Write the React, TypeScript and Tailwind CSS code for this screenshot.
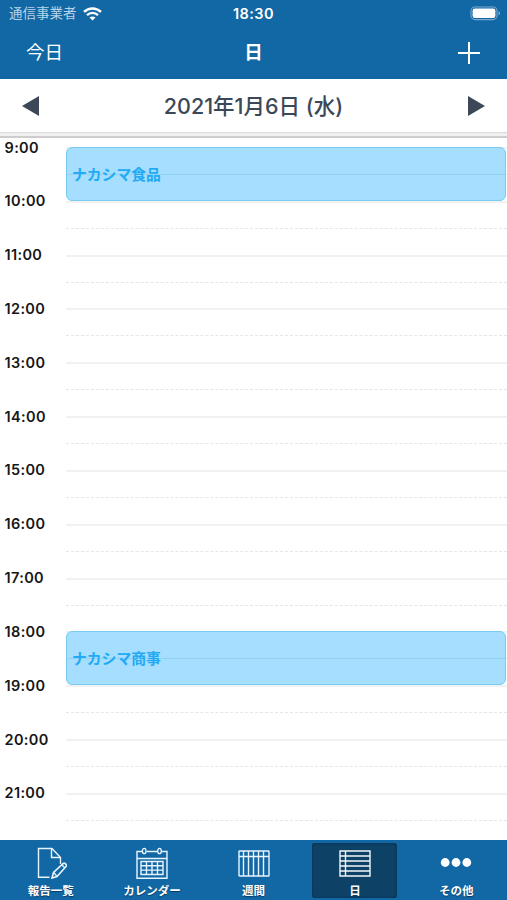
import React from "react";

const hours = [9, 10, 11, 12, 13, 14, 15, 16, 17, 18, 19, 20, 21];

const events: Record<number, string> = {
  9: "ナカシマ食品",
  18: "ナカシマ商事",
};

const WifiIcon = () => (
  <svg className="ml-[6px] h-[14px] w-[19px]" viewBox="0 0 19 14" fill="none">
    <path d="M1 4.9C5.8.3 13.2.3 18 4.9" stroke="white" strokeWidth="2.5" />
    <path d="M4 8.1c3.1-3 7.9-3 11 0" stroke="white" strokeWidth="2.4" />
    <path d="M6.5 10.6c1.7-1.6 4.3-1.6 6 0l-3 3z" fill="white" />
  </svg>
);

const BatteryIcon = () => (
  <svg className="h-[15px] w-[31px]" viewBox="0 0 31 15" fill="none">
    <rect
      x="1"
      y="1"
      width="26"
      height="12.6"
      rx="4"
      stroke="#78a9cd"
      strokeWidth="1.1"
    />
    <rect x="2.6" y="2.6" width="22.8" height="9.4" rx="2.2" fill="white" />
    <path d="M28.5 5v4.6c1-.5 1.6-1.3 1.6-2.3S29.5 5.5 28.5 5z" fill="#78a9cd" />
  </svg>
);

const ReportIcon = () => (
  <svg className="h-8 w-8" viewBox="0 0 32 32" fill="none" stroke="#e8f5ff">
    <path d="M14.5 30.3H3.5V1.5H17L25.5 10.5V17" strokeWidth="1.4" />
    <path d="M16.5 1.5V10.5H25.5" strokeWidth="1.4" />
    <path
      d="M17 31l1.500-5.500L28.300 16.500q1-.7 2 .2l.9.900q.7 1-.2 1.900L22 29.500z"
      strokeWidth="1.600"
    />
    <path d="M27 18l3 3M18.800 25.500l3 3.700" strokeWidth="1.300" />
  </svg>
);

const CalendarIcon = () => (
  <svg className="h-8 w-8" viewBox="0 0 32 32" fill="none" stroke="#e8f5ff">
    <path
      d="M6 4.500H1V31.300H31V4.500H25.500M10.500 4.500h11M1 11.500h30"
      strokeWidth="1.400"
    />
    <ellipse cx="8.200" cy="4" rx="1.800" ry="2.700" strokeWidth="1.300" />
    <ellipse cx="23.500" cy="4" rx="1.800" ry="2.700" strokeWidth="1.300" />
    <path
      d="M5 14.500H27V27.500H5zM5 18.800H27M5 23.100H27M10.500 14.500v13M16 14.500v13M21.500 14.500v13"
      strokeWidth="1.400"
    />
  </svg>
);

const WeekIcon = () => (
  <svg className="h-8 w-8" viewBox="0 0 32 32" fill="none" stroke="#e8f5ff">
    <rect x="1" y="4" width="30" height="25" rx=".5" strokeWidth="1.400" />
    <path
      d="M1 9.500h30M5.500 4v25M10.500 4v25M15.500 4v25M20.500 4v25M25.500 4v25"
      strokeWidth="1.400"
    />
  </svg>
);

const DayIcon = () => (
  <svg className="h-8 w-8" viewBox="0 0 32 32" fill="none" stroke="#f3f8fc">
    <path
      d="M1 4H31V29H1zM6.500 4v25M1 9h30M1 14h30M1 19h30M1 24h30"
      strokeWidth="1.400"
    />
  </svg>
);

const MoreIcon = () => (
  <svg className="h-8 w-8" viewBox="0 0 32 32" fill="white">
    <circle cx="5.200" cy="15.500" r="4.400" />
    <circle cx="16" cy="15.500" r="4.400" />
    <circle cx="26.800" cy="15.500" r="4.400" />
  </svg>
);

interface TabProps {
  label: string;
  icon: React.ReactNode;
  active?: boolean;
}

const Tab: React.FC<TabProps> = ({ label, icon, active }) => (
  <div className="flex flex-1 justify-center pt-[3px]">
    <button
      className={
        active
          ? "flex h-[55px] w-[85px] flex-col items-center rounded-[3px] bg-[#0d4266] pt-[4px] shadow-[inset_0_0_3px_#062c48]"
          : "flex h-[55px] w-[85px] flex-col items-center pt-[4px]"
      }
    >
      {icon}
      <span className="mt-[5px] whitespace-nowrap text-[11.5px] font-bold leading-[14px] text-white [text-shadow:0_1px_1px_#063a63]">
        {label}
      </span>
    </button>
  </div>
);

const HourRow = ({ hour }: { hour: number }) => (
  <div className="flex h-[53.83px] shrink-0">
    <div className="-mt-[9.5px] w-[66px] shrink-0 pl-[4.5px] text-[14.5px] font-semibold leading-5 tracking-[0.35px] text-[#161616]">
      {hour}:00
    </div>
    <div className="relative flex-1">
      <div className="h-[27px] border-t-2 border-[#f1f1f2]" />
      <div className="border-t border-dashed border-[#e6e6e6]" />
      {events[hour] && (
        <div className="absolute inset-x-0 top-0 mr-px flex h-[53.5px] items-center rounded-[6px] border-[1.5px] border-[#7bcaf0] bg-[#a5deff] pl-[5px] text-[14.8px] font-bold text-[#22aaf5]">
          <div className="absolute inset-x-0 top-[26px] h-px bg-[#93d1f0]" />
          <span className="relative top-px">{events[hour]}</span>
        </div>
      )}
    </div>
  </div>
);

const App = () => (
  <div className="flex h-[900px] w-[507px] flex-col overflow-hidden bg-white font-['Inter','Noto_Sans_CJK_JP',sans-serif]">
    <header className="h-[79px] shrink-0 bg-[#1267a5] text-white">
      <div className="grid h-[27px] grid-cols-3 items-center px-[9px]">
        <div className="flex items-center text-[13.5px] text-[#b9d4e8]">
          通信事業者
          <WifiIcon />
        </div>
        <div className="text-center text-[14.5px] font-semibold tracking-[0.4px]">
          18:30
        </div>
        <div className="-mr-[3px] flex justify-end">
          <BatteryIcon />
        </div>
      </div>
      <div className="grid h-[52px] grid-cols-3 items-center px-[26px]">
        <div className="text-[18.5px]">今日</div>
        <div className="text-center text-[18.5px] font-bold">日</div>
        <svg
          className="mr-px h-[22px] w-[22px] justify-self-end"
          viewBox="0 0 22 22"
          stroke="white"
          strokeWidth="2"
        >
          <path d="M11 0v22M0 11h22" />
        </svg>
      </div>
    </header>

    <div className="flex h-[53px] shrink-0 items-center justify-between px-[21px] text-[#3c4858]">
      <svg className="h-5 w-[18px]" viewBox="0 0 18 20" fill="currentColor">
        <path d="M18 0v20L1 10z" />
      </svg>
      <h1 className="pt-[2px] text-[21.5px] font-medium">
        2021年1月6日 (水)
      </h1>
      <svg className="h-5 w-[18px]" viewBox="0 0 18 20" fill="currentColor">
        <path d="M0 0v20l17-10z" />
      </svg>
    </div>
    <div className="h-[6px] shrink-0 border-b-2 border-t border-b-[#cdcdcd] border-t-[#dadada] bg-[#f0f0f0]" />

    <main className="flex min-h-0 flex-1 flex-col overflow-hidden pt-[9px]">
      {hours.map((hour) => (
        <HourRow key={hour} hour={hour} />
      ))}
    </main>

    <nav className="flex h-[60px] shrink-0 bg-[#1267a5]">
      <Tab label="報告一覧" icon={<ReportIcon />} />
      <Tab label="カレンダー" icon={<CalendarIcon />} />
      <Tab label="週間" icon={<WeekIcon />} />
      <Tab label="日" icon={<DayIcon />} active />
      <Tab label="その他" icon={<MoreIcon />} />
    </nav>
  </div>
);

export default App;
